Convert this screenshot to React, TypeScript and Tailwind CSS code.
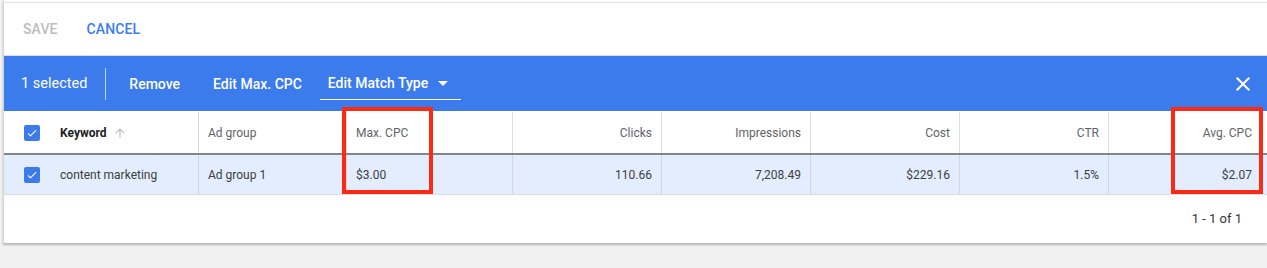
import React from "react";

const font = { fontFamily: "Roboto, 'Liberation Sans', Arial, sans-serif" };

function Check() {
  return (
    <div className="w-[16px] h-[16px] rounded-[2px] bg-[#3b7bec] flex items-center justify-center">
      <svg width="12" height="12" viewBox="0 0 24 24">
        <path d="M9 16.17L4.83 12l-1.42 1.41L9 19 21 7l-1.41-1.41z" fill="white" />
      </svg>
    </div>
  );
}

export default function App() {
  return (
    <div style={font} className="relative w-full h-[268px] bg-[#f1f1f1] pl-[3px] overflow-hidden">
      <div className="bg-white border-l border-[#d6d6d6] shadow-[0_2px_2px_rgba(0,0,0,0.25)]">
        <div className="h-[2px] bg-white" />
        <div className="h-[1px] bg-[#e3e3e3]" />
        {/* save/cancel */}
        <div className="h-[53px] flex items-center pl-[19px] gap-[29px] text-[14px] font-medium tracking-[0.1px] border-b border-[#dedede]">
          <span className="text-[#bdbdbd]">SAVE</span>
          <span className="text-[#3b7bec]">CANCEL</span>
        </div>
        {/* blue bar */}
        <div className="h-[55px] bg-[#3b7bec] flex items-center text-white text-[14px] pl-[17px] pt-[1px]">
          <span className="pr-[18px] text-[14.5px]">1 selected</span>
          <div className="w-px h-[32px] bg-[#c7dafa]" />
          <span className="ml-[23px] font-medium">Remove</span>
          <span className="ml-[33px] font-medium">Edit Max. CPC</span>
          <div className="ml-[18px] h-[32px] w-[141px] border-b border-white flex items-center pl-[8px] font-medium">
            <span>Edit Match Type</span>
            <svg className="ml-[10px]" width="10" height="5" viewBox="0 0 10 5">
              <path d="M0 0l5 5 5-5z" fill="white" />
            </svg>
          </div>
          <div className="flex-1" />
          <svg className="mr-[12px]" width="24" height="24" viewBox="0 0 24 24">
            <path
              d="M19 6.41L17.59 5 12 10.59 6.41 5 5 6.41 10.59 12 5 17.59 6.41 19 12 13.41 17.59 19 19 17.59 13.41 12z"
              fill="white"
            />
          </svg>
        </div>
        {/* header */}
        <div className="h-[44px] flex border-b-2 border-[#80868b] text-[12px] text-[#5f6368] pt-[1px]">
          <div className="w-[195px] flex items-center pl-[20px] border-r border-[#dadce0]">
            <Check />
            <span className="ml-[20px] font-bold text-[#202124]">Keyword</span>
            <svg className="ml-[6px]" width="14" height="14" viewBox="0 0 24 24">
              <path d="M4 12l1.41 1.41L11 7.83V20h2V7.83l5.58 5.59L20 12l-8-8-8 8z" fill="#bdbdbd" />
            </svg>
          </div>
          <div className="w-[148px] flex items-center pl-[9px] border-r border-[#dadce0]">Ad group</div>
          <div className="w-[166px] flex items-center pl-[9px] border-r border-[#dadce0]">Max. CPC</div>
          <div className="w-[149px] flex items-center justify-end pr-[9px] border-r border-[#dadce0]">Clicks</div>
          <div className="w-[149px] flex items-center justify-end pr-[9px] border-r border-[#dadce0]">Impressions</div>
          <div className="w-[149px] flex items-center justify-end pr-[9px] border-r border-[#dadce0]">Cost</div>
          <div className="w-[149px] flex items-center justify-end pr-[9px] border-r border-[#dadce0]">CTR</div>
          <div className="flex-1 flex items-center justify-end pr-[15px]">Avg. CPC</div>
        </div>
        {/* data row */}
        <div className="h-[40px] flex bg-[#e3edfd] border-b border-[#dadce0] text-[12px] text-[#3c4043]">
          <div className="w-[195px] flex items-center pl-[20px] border-r border-[#d3d7dd]">
            <Check />
            <span className="ml-[20px]">content marketing</span>
          </div>
          <div className="w-[148px] flex items-center pl-[9px] border-r border-[#d3d7dd]">Ad group 1</div>
          <div className="w-[166px] flex items-center pl-[9px] border-r border-[#d3d7dd]">$3.00</div>
          <div className="w-[149px] flex items-center justify-end pr-[9px] border-r border-[#d3d7dd]">110.66</div>
          <div className="w-[149px] flex items-center justify-end pr-[9px] border-r border-[#d3d7dd]">7,208.49</div>
          <div className="w-[149px] flex items-center justify-end pr-[9px] border-r border-[#d3d7dd]">$229.16</div>
          <div className="w-[149px] flex items-center justify-end pr-[9px] border-r border-[#d3d7dd]">1.5%</div>
          <div className="flex-1 flex items-center justify-end pr-[15px]">$2.07</div>
        </div>
        {/* footer */}
        <div className="h-[48px] flex items-center justify-end pr-[25px] text-[13px] text-[#333]">1 - 1 of 1</div>
      </div>
      {/* red annotation boxes */}
      <div className="absolute left-[342px] top-[107px] w-[91px] h-[87px] border-[4px] border-[#fb2a14]" />
      <div className="absolute left-[1171px] top-[107px] w-[92px] h-[87px] border-[4px] border-[#fb2a14]" />
    </div>
  );
}
